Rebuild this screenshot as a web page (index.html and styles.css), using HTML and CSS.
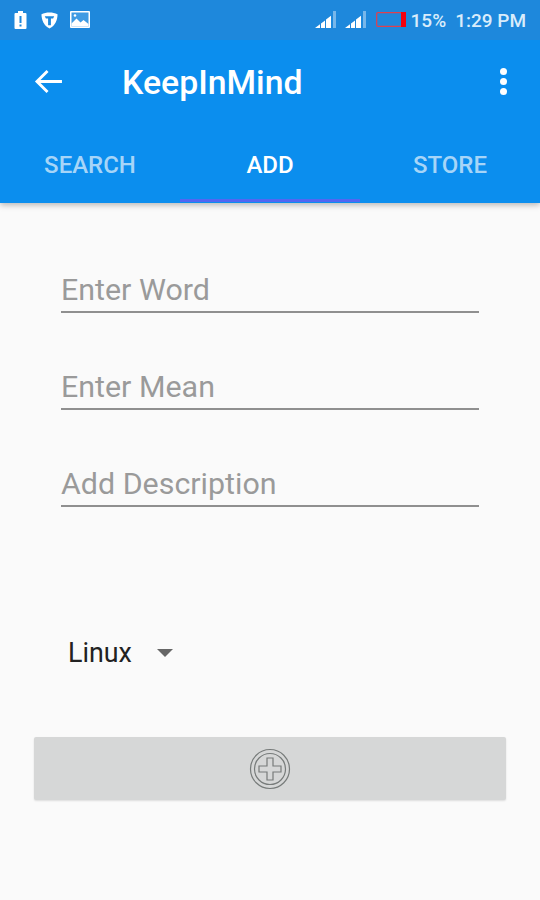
FILE: index.html
```html
<!DOCTYPE html>
<html lang="en">
<head>
<meta charset="utf-8">
<title>KeepInMind</title>
<link rel="stylesheet" href="styles.css">
</head>
<body>
<div class="screen">
  <header class="header">
    <div class="status">
      <div class="status-left">
        <svg class="ic-batt" viewBox="0 0 12 18"><path fill="#fff" d="M3.500 0h5v2h2.500a1 1 0 0 1 1 1v14a1 1 0 0 1-1 1H1a1 1 0 0 1-1-1V3a1 1 0 0 1 1-1h2.500z"/><path fill="#1e88dc" d="M5 5h2v7H5zM5 13.500h2v2H5z"/></svg>
        <svg class="ic-shield" viewBox="0 0 18 18"><path fill="#fff" d="M9 0.500c3 0 6 .6 8.500 1.800 0 6-2.500 12-8.500 15.200C3 14.300.5 8.300.5 2.300 3 1.100 6 .5 9 .5z"/><path fill="#1e88dc" d="M4 4.500h10l-1.200 2.500H10.500v7h-3V7H5.200z"/></svg>
        <svg class="ic-photo" viewBox="0 0 20 17"><rect width="20" height="17" rx="1" fill="#fff"/><rect x="1.500" y="1.500" width="17" height="14" fill="#3f9be3"/><path fill="#fff" d="M1.500 15.500v-3l5-5 4 4 3-2.500 5 4v2.500z"/><circle cx="5" cy="4.500" r="1.300" fill="#fff"/></svg>
      </div>
      <div class="status-right">
        <svg class="ic-signal" viewBox="0 0 22 17"><path fill="#fff" fill-opacity=".4" d="M18 0h3v17h-3z"/><path fill="#fff" d="M0 17l5-3.800V17zM6 17v-4.600l4-3V17zM11 17V8.600l5-3.800V17z"/></svg>
        <svg class="ic-signal sig2" viewBox="0 0 22 17"><path fill="#fff" fill-opacity=".4" d="M18 0h3v17h-3z"/><path fill="#fff" d="M0 17l5-3.800V17zM6 17v-4.600l4-3V17zM11 17V8.600l5-3.800V17z"/></svg>
        <svg class="ic-level" viewBox="0 0 30 15"><rect x=".7" y=".7" width="28.600" height="13.600" rx="1" fill="none" stroke="#e0404e" stroke-width="1.200"/><rect x="25" y="0" width="5" height="15" fill="#f5000f"/></svg>
        <span class="status-pct">15%</span>
        <span class="status-time">1:29 PM</span>
      </div>
    </div>
    <div class="toolbar">
      <svg class="ic-back" viewBox="0 0 30 26"><path fill="none" stroke="#fff" stroke-width="3" d="M29 13H3M14 2 3 13l11 11"/></svg>
      <h1 class="title">KeepInMind</h1>
      <div class="more"><i></i><i></i><i></i></div>
    </div>
    <nav class="tabs">
      <div class="tab">SEARCH</div>
      <div class="tab active">ADD</div>
      <div class="tab">STORE</div>
    </nav>
  </header>
  <main class="form">
    <div class="field">Enter Word</div>
    <div class="field">Enter Mean</div>
    <div class="field">Add Description</div>
    <div class="spinner"><span>Linux</span><i class="caret"></i></div>
    <button class="add" type="button" aria-label="Add">
      <svg class="ic-add" viewBox="0 0 42 42" fill="none" stroke="#777b7a"><circle cx="21" cy="21" r="19.500" stroke-width="1.200"/><circle cx="21" cy="21" r="15.500" stroke-width="1.200"/><path stroke-width="1.200" d="M18 10h6v8h8v6h-8v8h-6v-8h-8v-6h8z"/></svg>
    </button>
  </main>
</div>
</body>
</html>
```
FILE: styles.css
```css
* { box-sizing: border-box; }
html, body { margin: 0; padding: 0; }
body { width: 540px; height: 900px; overflow: hidden; background: #fafafa; font-family: Roboto, "Liberation Sans", sans-serif; }
.screen { width: 540px; height: 900px; display: flex; flex-direction: column; }
.header { height: 203px; background: #0b8eee; box-shadow: 0 2px 6px rgba(0,0,0,.28); position: relative; }
.status { height: 40px; background: #1e88dc; display: flex; justify-content: space-between; align-items: center; padding: 0 14px 0 14px; color: #d9ecfb; }
.status-left { display: flex; align-items: center; gap: 14px; }
.ic-batt { width: 13px; height: 18px; }
.ic-shield { width: 17px; height: 17px; }
.ic-photo { width: 20px; height: 17px; margin-left: -2px; margin-top: -2px; }
.status-right { display: flex; align-items: center; }
.ic-signal { width: 22px; height: 17px; margin-top: -1px; }
.sig2 { margin-left: 8px; }
.ic-level { width: 30px; height: 15px; margin-left: 9px; margin-top: -2px; }
.status-pct { font-size: 19px; font-weight: 500; margin-left: 5px; }
.status-time { font-size: 19px; font-weight: 500; margin-left: 9px; }
.toolbar { height: 86px; display: flex; align-items: center; padding: 0 0 4px 34px; position: relative; color: #fff; }
.ic-back { width: 29px; height: 25px; }
.title { margin: 0 0 0 59px; font-size: 33.800px; font-weight: 500; flex: 1; position: relative; top: 1px; }
.more { display: flex; flex-direction: column; gap: 3px; margin-right: 33px; }
.more i { width: 7px; height: 7px; border-radius: 50%; background: #fff; }
.tabs { display: grid; grid-template-columns: repeat(3, 1fr); height: 77px; }
.tab { display: flex; justify-content: center; padding-top: 25px; font-size: 24px; font-weight: 500; color: #a6d5f8; }
.tab.active { color: #fff; border-bottom: 3px solid #5266f2; height: 76px; }
.form { flex: 1; padding: 0 34px; }
.field { margin: 0 27px; height: 97px; border-bottom: 2px solid #8f8f8f; font-size: 30.400px; color: #9a9a9a; display: flex; align-items: flex-end; padding-bottom: 4px; }
.field:first-child { height: 110px; }
.spinner { display: flex; align-items: center; margin: 130px 0 0 34px; height: 32px; font-size: 26.800px; color: #222; }
.caret { margin-left: 25px; border-left: 8.500px solid transparent; border-right: 8.500px solid transparent; border-top: 8px solid #666; }
.add { display: flex; width: 472px; height: 63px; margin-top: 68px; align-items: center; justify-content: center; background: #d6d7d7; border: 0; border-radius: 2px; padding: 0; box-shadow: 0 1px 2px rgba(0,0,0,.12); }
.ic-add { width: 42px; height: 42px; }
```
